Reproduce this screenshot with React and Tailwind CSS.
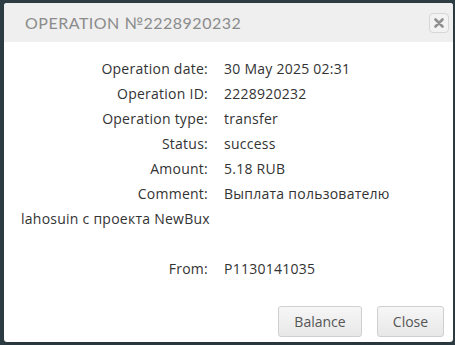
const rows = [
  ["Operation date:", "30 May 2025 02:31"],
  ["Operation ID:", "2228920232"],
  ["Operation type:", "transfer"],
  ["Status:", "success"],
  ["Amount:", "5.18 RUB"],
];

const Label = ({ children }) => (
  <span className="mr-[16px] inline-block w-[187px] text-right">{children}</span>
);

const App = () => {
  return (
    <div className="h-[345px] w-[455px] overflow-hidden bg-[#2e3d44] pl-[4px] pt-[3px]">
      <div className="flex h-[339px] w-[449px] flex-col rounded-[3px] bg-white shadow-md">
        <div className="flex h-[39px] items-center justify-between rounded-t-[3px] bg-[#efefef] pl-[21px] pr-[4px]">
          <h3
            className="text-[16px] uppercase tracking-[0.5px] text-[#8b8b8b]"
            style={{ fontFamily: "Lato, 'Noto Sans', sans-serif" }}
          >
            Operation №2228920232
          </h3>
          <button className="flex h-[20px] w-[20px] items-center justify-center rounded-[4px] border border-[#d6d6d6] bg-[#f2f2f2] text-[#9a9a9a]">
            <svg width="10" height="10" viewBox="0 0 10 10">
              <path d="M1.5 1.5 L8.5 8.5 M8.5 1.5 L1.5 8.5" stroke="#8f8f8f" strokeWidth="2.6" strokeLinecap="round" />
            </svg>
          </button>
        </div>

        <div
          className="flex-1 px-[17px] pt-[14px] text-[14px] leading-[25px] tracking-[0.25px] text-[#333]"
          style={{ fontFamily: "'Open Sans', 'Noto Sans', sans-serif" }}
        >
          {rows.map(([label, value]) => (
            <div key={label}>
              <Label>{label}</Label>
              {value}
            </div>
          ))}
          <div>
            <Label>Comment:</Label>
            Выплата пользователю lahosuin с проекта NewBux
          </div>
          <div className="mt-[25px]">
            <Label>From:</Label>
            P1130141035
          </div>
        </div>

        <div
          className="flex justify-end gap-[15px] pb-[5px] pr-[9px]"
          style={{ fontFamily: "'Open Sans', 'Noto Sans', sans-serif" }}
        >
          <button className="h-[31px] w-[84px] rounded-[3px] border border-[#cfcfcf] bg-gradient-to-b from-[#f6f6f6] to-[#e8e8e8] text-[14px] text-[#555]">
            Balance
          </button>
          <button className="h-[31px] w-[67px] rounded-[3px] border border-[#cfcfcf] bg-gradient-to-b from-[#f6f6f6] to-[#e8e8e8] text-[14px] text-[#555]">
            Close
          </button>
        </div>
      </div>
    </div>
  );
};

export default App;
